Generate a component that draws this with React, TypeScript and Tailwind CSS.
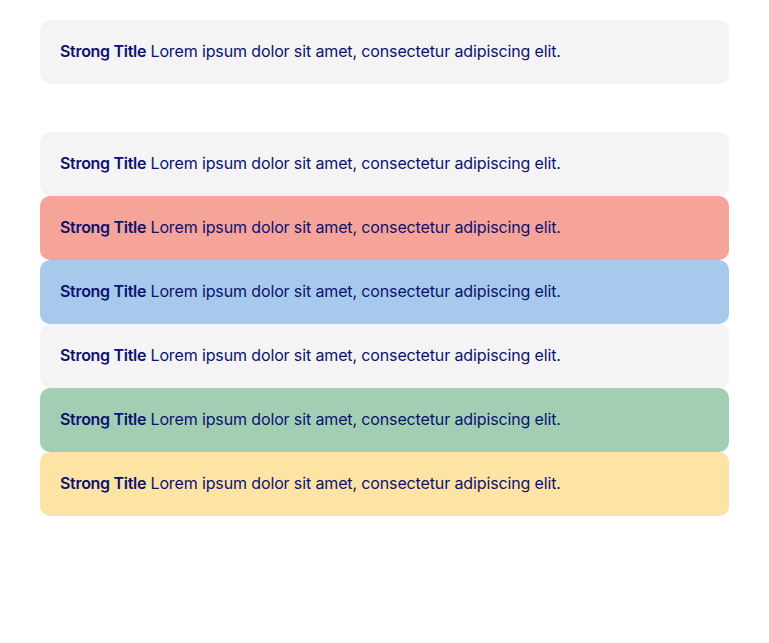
import React from "react";

const colors = ["bg-[#f4f4f4]", "bg-[#f6a399]", "bg-[#a6c9ec]", "bg-[#f4f4f4]", "bg-[#a2cfb4]", "bg-[#fee4a4]"];

function Card({ bg }: { bg: string }) {
  return (
    <div className={`${bg} h-16 rounded-[10px] px-5 pb-[2px] flex items-center text-[16px] text-[#0b1270]`}>
      <p>
        <strong className="font-semibold tracking-[-0.3px]">Strong Title</strong> Lorem ipsum dolor sit amet, consectetur adipiscing elit.
      </p>
    </div>
  );
}

export default function App() {
  return (
    <div className="bg-white min-h-[643px] px-10 pt-5 tracking-[-0.13px]" style={{ fontFamily: "Inter, sans-serif" }}>
      <Card bg="bg-[#f4f4f4]" />
      <div className="mt-12 flex flex-col">
        {colors.map((c, i) => (
          <Card key={i} bg={c} />
        ))}
      </div>
    </div>
  );
}
